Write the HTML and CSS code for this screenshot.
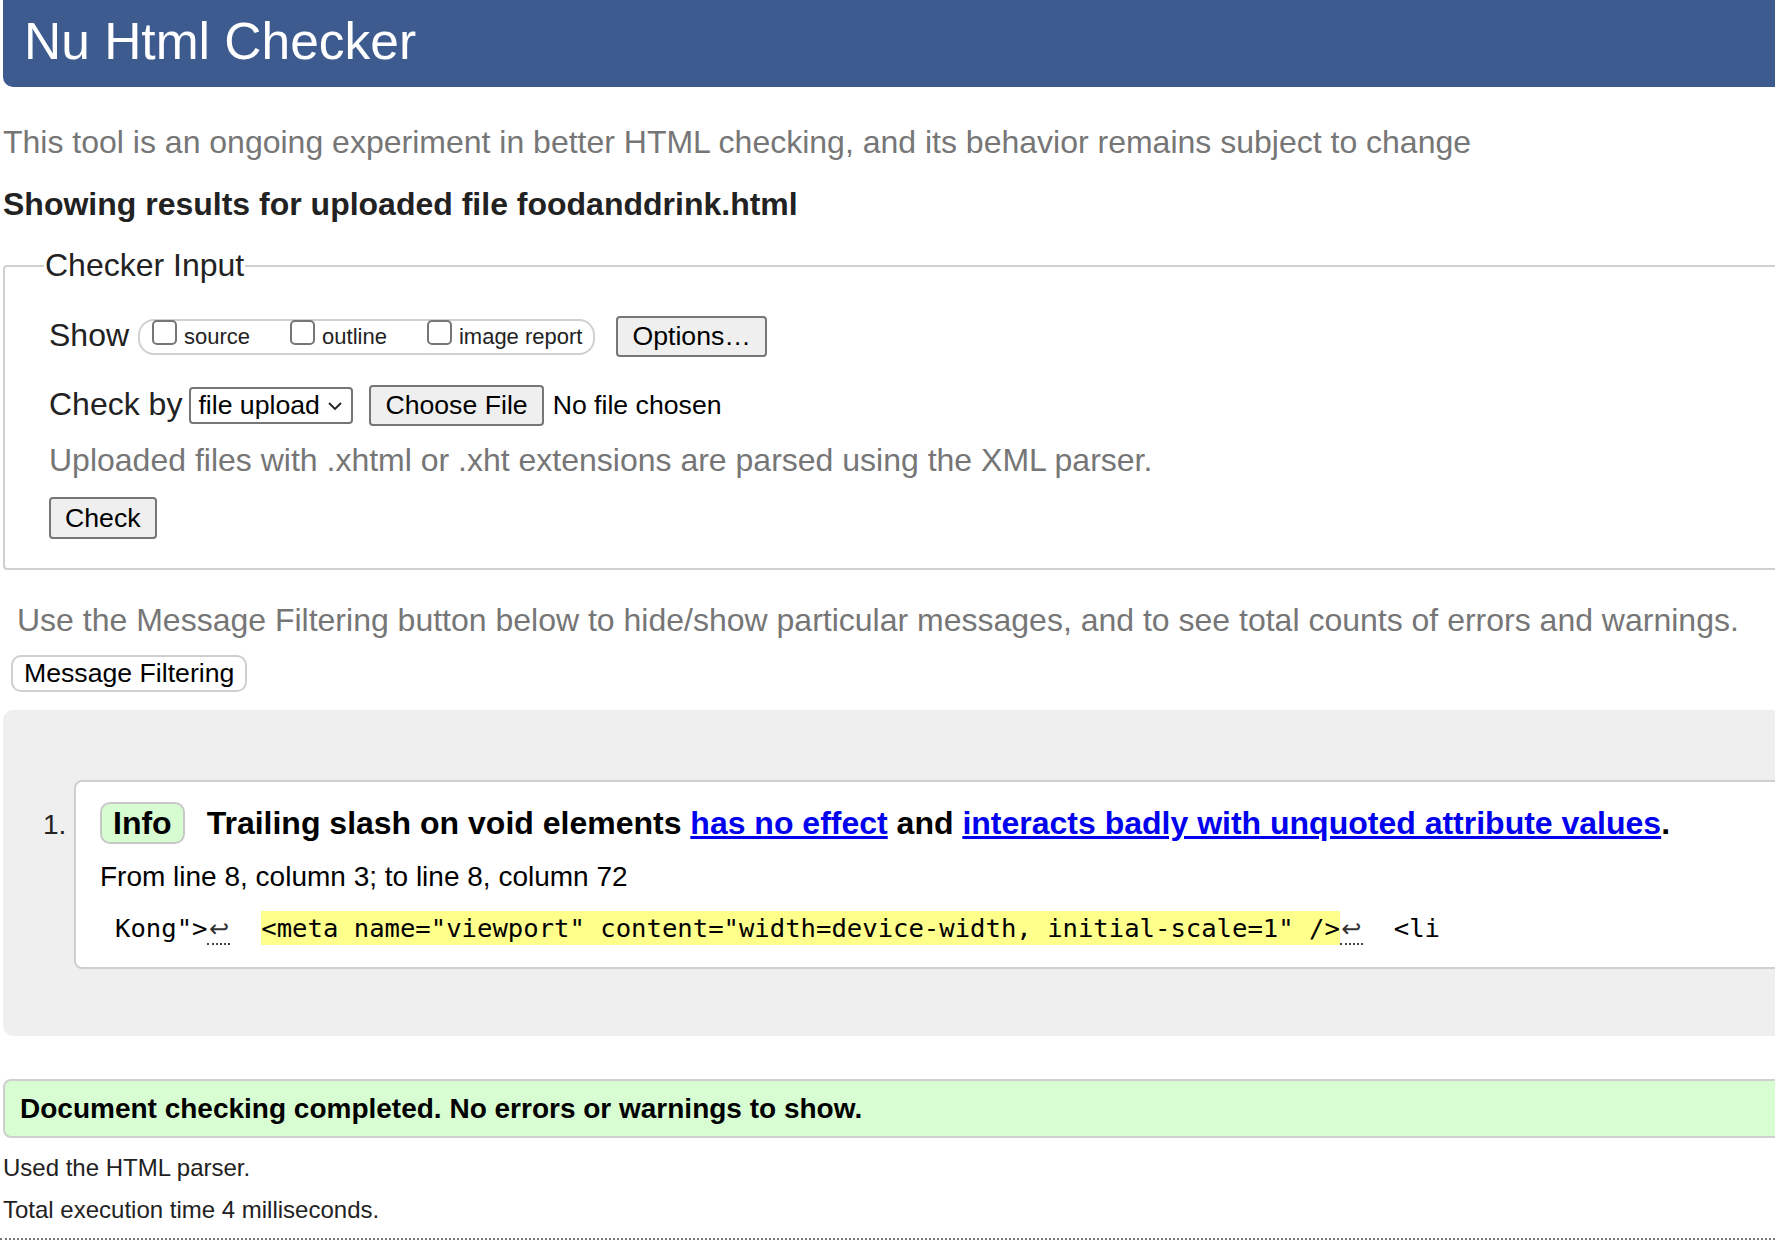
FILE: index.html
```html
<!DOCTYPE html>
<html lang="en">
<head>
<meta charset="utf-8">
<title>Nu Html Checker</title>
<link rel="stylesheet" href="styles.css">
</head>
<body>
<h1 class="title">Nu Html Checker</h1>
<p class="intro">This tool is an ongoing experiment in better HTML checking, and its behavior remains subject to change</p>
<h2 class="results-heading">Showing results for uploaded file foodanddrink.html</h2>
<form class="checker-form">
  <fieldset class="checker">
    <legend>Checker Input</legend>
    <div class="row">
      <span class="label">Show</span>
      <span class="opts">
        <label class="opt"><input type="checkbox" class="cb"><span>source</span></label>
        <label class="opt"><input type="checkbox" class="cb"><span>outline</span></label>
        <label class="opt"><input type="checkbox" class="cb"><span>image report</span></label>
      </span>
      <button type="button" class="btn btn-options">Options…</button>
    </div>
    <div class="row row-check">
      <span class="label">Check by</span>
      <span class="select">file upload<svg class="chev" width="16" height="10" viewBox="0 0 16 10"><polyline points="2,2 8,8 14,2" fill="none" stroke="#222" stroke-width="1.8"/></svg></span>
      <button type="button" class="btn btn-file">Choose File</button>
      <span class="nofile">No file chosen</span>
    </div>
    <p class="hint">Uploaded files with .xhtml or .xht extensions are parsed using the XML parser.</p>
    <div class="row row-submit">
      <button type="button" class="btn btn-check">Check</button>
    </div>
  </fieldset>
</form>
<p class="filter-hint">Use the Message Filtering button below to hide/show particular messages, and to see total counts of errors and warnings.</p>
<button type="button" class="filter-btn">Message Filtering</button>
<div class="results">
  <ol class="messages">
    <li class="message">
      <span class="num">1.</span>
      <div class="msg-box">
        <p class="msg-head"><span class="badge">Info</span><span class="msg-text">Trailing slash on void elements <a href="#">has no effect</a> and <a href="#">interacts badly with unquoted attribute values</a>.</span></p>
        <p class="location">From line 8, column 3; to line 8, column 72</p>
        <p class="extract"><code>Kong"&gt;<span class="lf">↩</span>  <b class="hl">&lt;meta name="viewport" content="width=device-width, initial-scale=1" /&gt;</b><span class="lf">↩</span>  &lt;li</code></p>
      </div>
    </li>
  </ol>
</div>
<p class="success">Document checking completed. No errors or warnings to show.</p>
<p class="stats">Used the HTML parser.</p>
<p class="stats stats-time">Total execution time 4 milliseconds.</p>
<hr class="dotted">
</body>
</html>
```

FILE: styles.css
```css
html {
  overflow: hidden;
}
body {
  margin: 0;
  font-family: "Liberation Sans", Arial, sans-serif;
  color: #222;
  background: #fff;
}
.title {
  margin: 0 -60px 0 3px;
  height: 87px;
  box-sizing: border-box;
  padding: 0 0 0 21px;
  background: #3d5b8f;
  color: #fff;
  font-size: 51.5px;
  font-weight: normal;
  line-height: 82px;
  border-radius: 0 0 0 10px;
}
.intro {
  margin: 37px 0 0 3px;
  font-size: 32px;
  line-height: 37px;
  color: #767676;
}
.results-heading {
  margin: 25px 0 0 3px;
  font-size: 32px;
  line-height: 37px;
  font-weight: bold;
  color: #222;
}
.checker-form {
  margin: 24px -60px 0 3px;
}
.checker {
  margin: 0;
  padding: 0 0 29px 44px;
  border: 2px solid #d0d0d0;
  border-radius: 4px 0 0 4px;
  min-width: 0;
}
.checker legend {
  margin-left: -5px;
  padding: 0 1px;
  font-size: 32px;
  line-height: 37px;
  color: #222;
}
.row {
  display: flex;
  align-items: center;
  height: 41px;
  margin-top: 32px;
}
.row-check {
  margin-top: 28px;
}
.row-submit {
  margin-top: 18px;
  height: 42px;
}
.label {
  font-size: 32px;
  line-height: 37px;
  margin-bottom: 3px;
  margin-right: 9px;
}
.row-check .label {
  margin-right: 7px;
}
.opts {
  display: flex;
  align-items: flex-start;
  gap: 40px;
  height: 36px;
  box-sizing: border-box;
  border: 2px solid #d0d0d0;
  border-radius: 16px;
  padding: 0 11px 0 12px;
  margin-right: 21px;
}
.opt {
  display: flex;
  align-items: flex-start;
  font-size: 22px;
  line-height: 32px;
  color: #222;
}
.cb {
  appearance: none;
  -webkit-appearance: none;
  width: 25px;
  height: 25px;
  margin: -1px 7px 0 0;
  box-sizing: border-box;
  border: 2px solid #767676;
  border-radius: 5px;
  background: #fff;
}
.btn {
  height: 41px;
  box-sizing: border-box;
  padding: 0 13px;
  border: 2px solid #767676;
  border-radius: 4px;
  background: #efefef;
  font-family: "Liberation Sans", Arial, sans-serif;
  font-size: 26.67px;
  color: #000;
}
.btn-options {
  padding: 0 14px;
}
.btn-check {
  height: 42px;
  padding: 0 14px;
}
.select {
  display: flex;
  align-items: center;
  justify-content: space-between;
  width: 164px;
  height: 37px;
  box-sizing: border-box;
  padding: 0 8px 0 7px;
  border: 2px solid #767676;
  border-radius: 4px;
  background: #fff;
  font-size: 26.67px;
  color: #000;
  margin-right: 16px;
}
.chev {
  display: block;
}
.btn-file {
  padding: 0 14px;
}
.nofile {
  margin-left: 9px;
  font-size: 26.67px;
  color: #000;
}
.hint {
  margin: 16px 0 0 0;
  font-size: 32px;
  line-height: 37px;
  color: #767676;
}
.filter-hint {
  margin: 32px 0 0 17px;
  font-size: 32px;
  line-height: 37px;
  color: #767676;
}
.filter-btn {
  display: block;
  margin: 16px 0 0 11px;
  height: 37px;
  box-sizing: border-box;
  padding: 0 11px;
  border: 2px solid #cfcfcf;
  border-radius: 10px;
  background: #fff;
  font-family: "Liberation Sans", Arial, sans-serif;
  font-size: 26.67px;
  color: #000;
}
.results {
  margin: 18px -60px 0 3px;
  padding: 70px 0 67px 0;
  background: #efefef;
  border-radius: 10px 0 0 10px;
}
.messages {
  margin: 0;
  padding: 0;
  list-style: none;
}
.message {
  display: flex;
  align-items: baseline;
}
.num {
  width: 31px;
  margin-left: 40px;
  font-size: 28px;
  color: #222;
}
.msg-box {
  flex: 1;
  background: #fff;
  border: 2px solid #cfcfcf;
  border-radius: 8px 0 0 8px;
  padding: 20px 0 21px 24px;
  color: #000;
}
.msg-head {
  display: flex;
  align-items: center;
  gap: 22px;
  margin: 0;
  font-weight: bold;
  font-size: 32px;
}
.badge {
  height: 42px;
  box-sizing: border-box;
  padding: 0 11px;
  border: 2px solid #c8c8c8;
  border-radius: 10px;
  background: #d8fcd2;
  line-height: 38px;
}
.msg-text {
  line-height: 37px;
}
.msg-text a {
  color: #0000ee;
}
.location {
  margin: 17px 0 0 0;
  font-size: 28px;
  line-height: 32px;
}
.extract {
  margin: 17px 0 0 15px;
  height: 36px;
  line-height: 36px;
  white-space: pre;
}
.extract code {
  font-family: "DejaVu Sans Mono", "Liberation Mono", monospace;
  font-size: 25.6px;
  line-height: 36px;
  color: #000;
}
.hl {
  font-weight: normal;
  background: #ffff8c;
  padding: 2px 0;
}
.lf {
  display: inline-block;
  width: 23px;
  height: 30px;
  box-sizing: border-box;
  text-align: center;
  font-family: "DejaVu Sans", sans-serif;
  font-size: 24px;
  line-height: 28px;
  vertical-align: baseline;
  color: #333;
  border-bottom: 2px dotted #444;
}
.success {
  margin: 43px -60px 0 3px;
  padding: 11px 0 11px 15px;
  border: 2px solid #cfcfcf;
  border-radius: 8px 0 0 8px;
  background: #d8fdd2;
  font-size: 28px;
  line-height: 33px;
  font-weight: bold;
  color: #000;
}
.stats {
  margin: 16px 0 0 3px;
  font-size: 24px;
  line-height: 28px;
  color: #222;
}
.stats-time {
  margin-top: 14px;
}
.dotted {
  margin: 14px 0 0 0;
  height: 0;
  border: 0;
  border-top: 2px dotted #777;
}
```
